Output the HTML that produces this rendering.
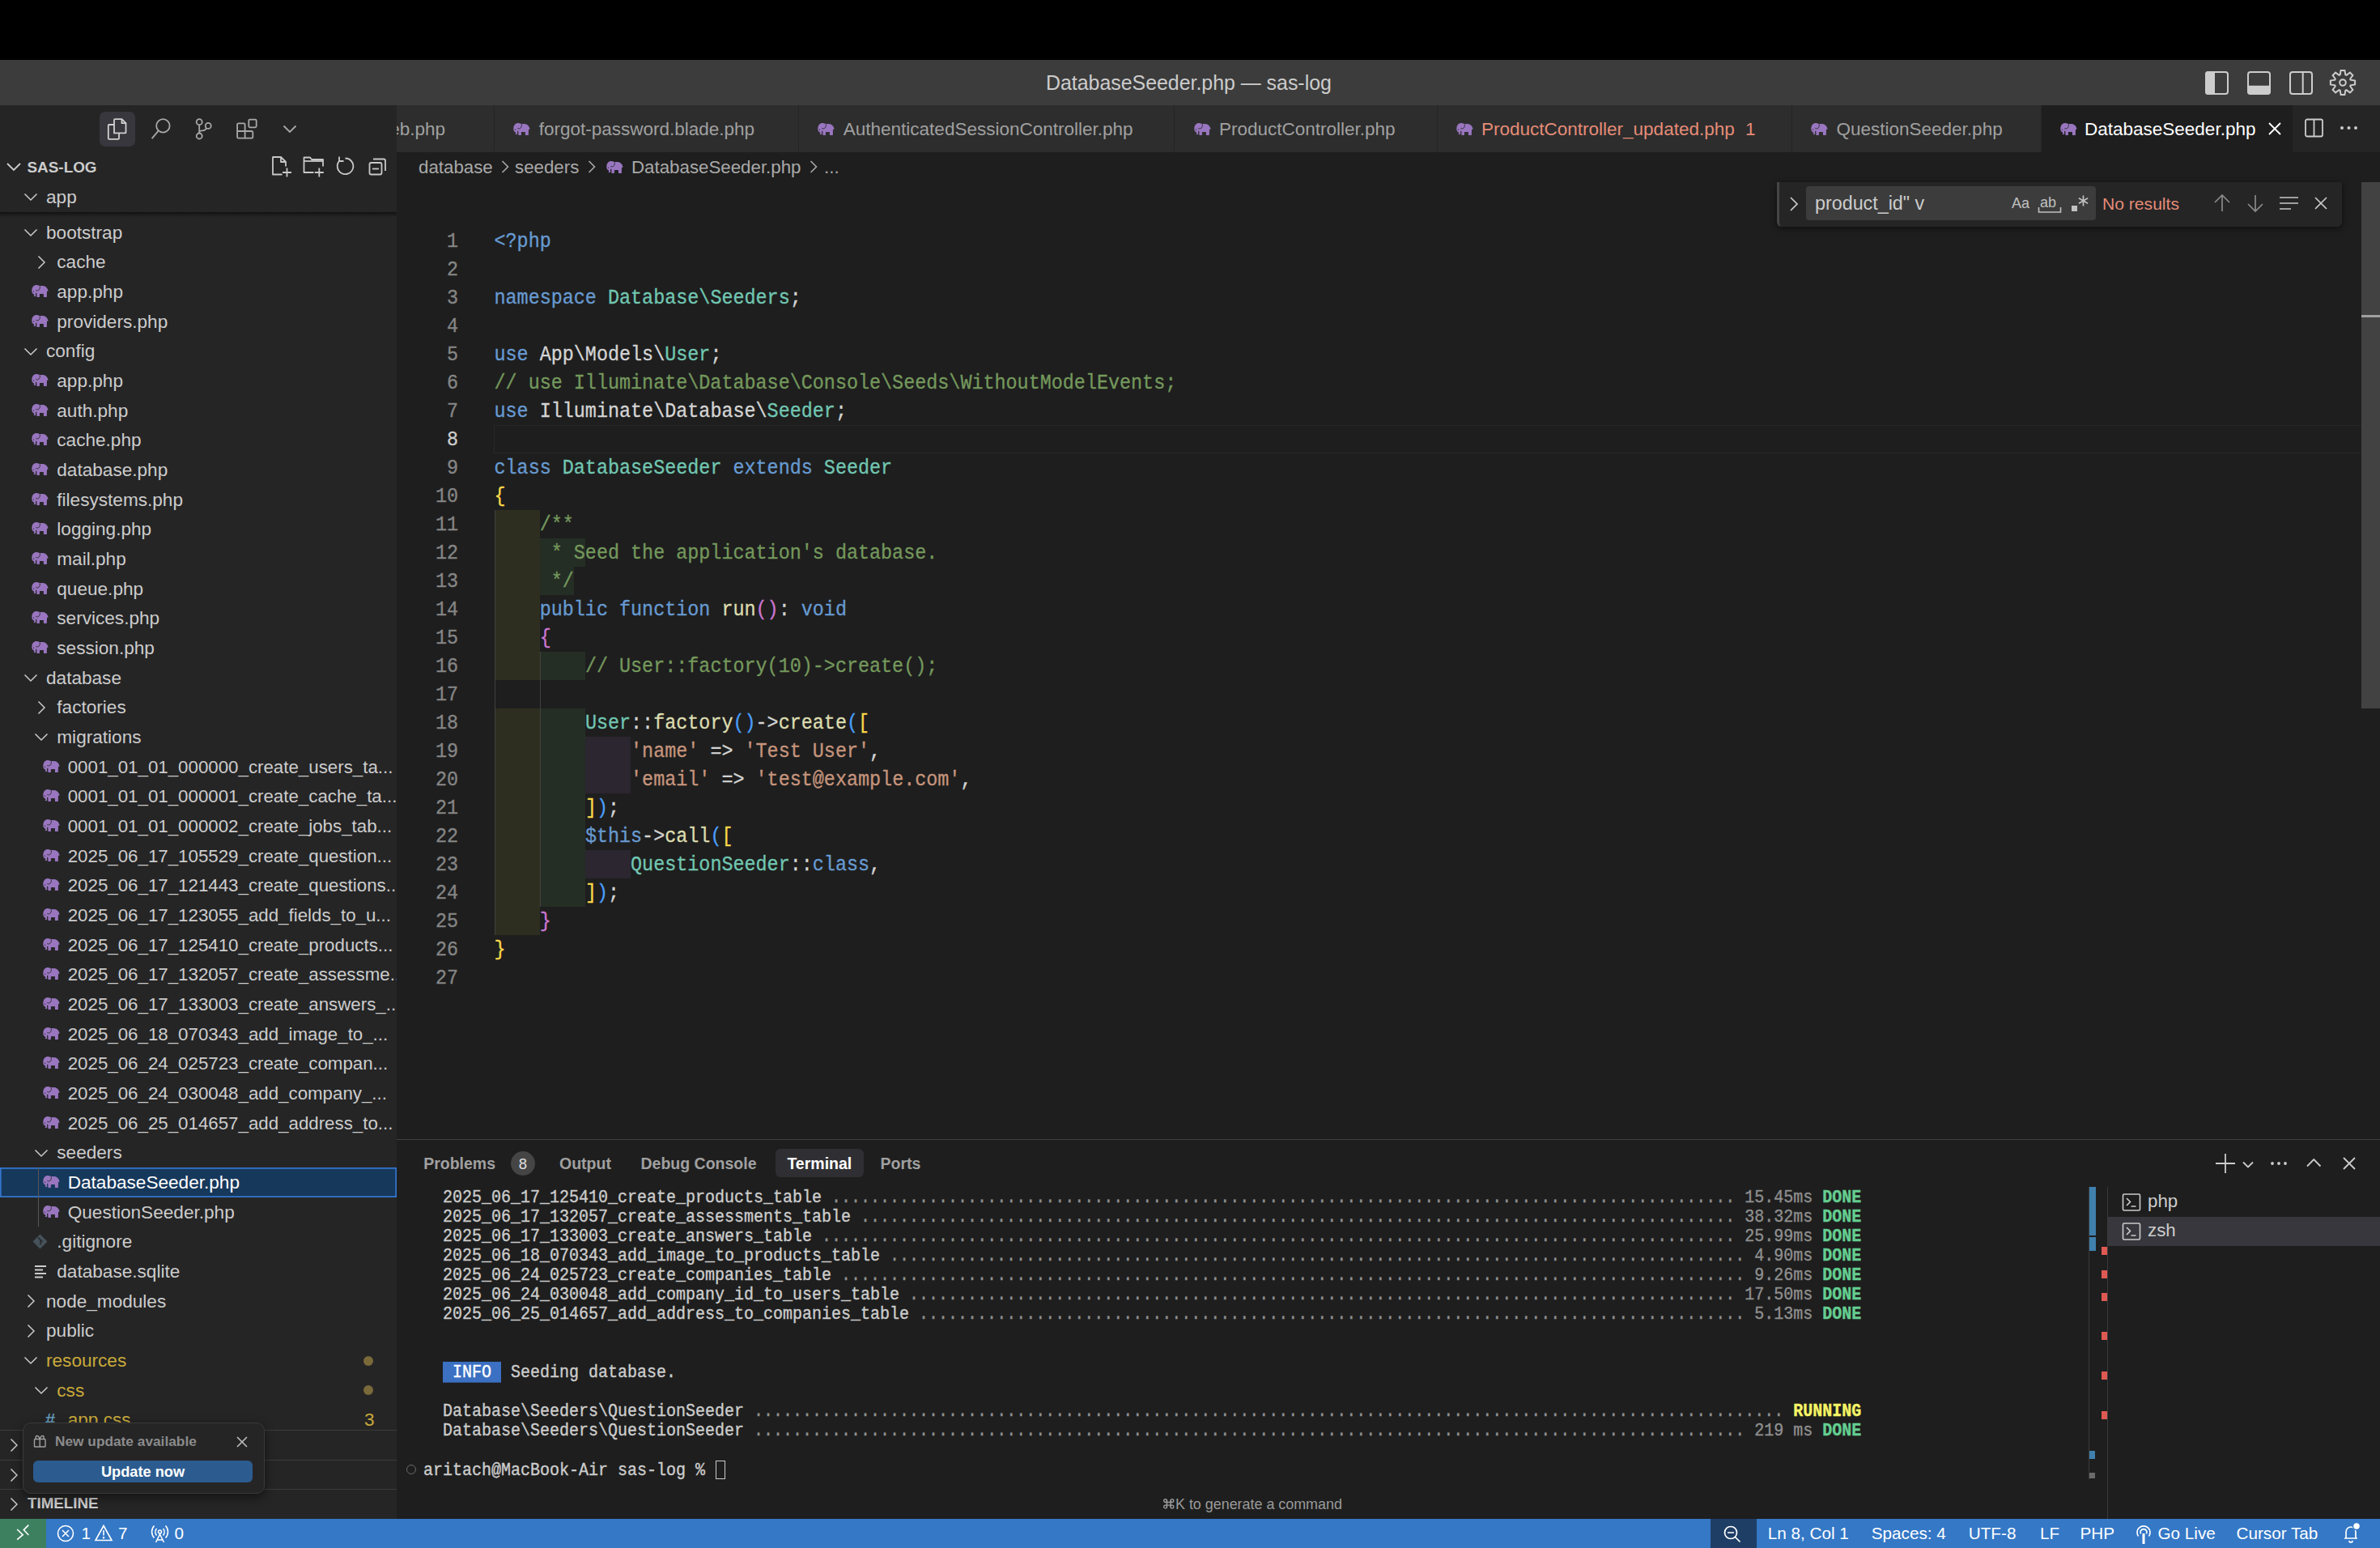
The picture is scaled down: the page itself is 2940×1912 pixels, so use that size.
<!DOCTYPE html><html><head><meta charset="utf-8"><style>
*{box-sizing:border-box}
body{margin:0;width:2940px;height:1912px;background:#000;position:relative;overflow:hidden;font-family:"Liberation Sans",sans-serif;color:#cccccc}
.abs{position:absolute}
.row{position:absolute;left:0;width:490px;height:36.667px;line-height:36.667px;font-size:22.3px;white-space:nowrap;color:#cccccc}
.row .t{position:absolute;top:1px;font-size:22.6px}
.row .t.tr{font-size:22.3px}
.chev{position:absolute;width:16px;height:16px}
.ele{position:absolute}
.code{position:absolute;left:610.5px;margin-top:2.5px;transform:scaleY(1.08);transform-origin:0 23.7px;-webkit-text-stroke:0.3px currentColor;font-family:"Liberation Mono",monospace;font-size:23.42px;white-space:pre;height:35px;line-height:35px;color:#d4d4d4}
.ln{position:absolute;left:491px;margin-top:2.5px;transform:scaleY(1.1);transform-origin:0 23.7px;-webkit-text-stroke:0.3px currentColor;width:75px;text-align:right;font-family:"Liberation Mono",monospace;font-size:23.42px;height:35px;line-height:35px;color:#6e7681}
.kw{color:#679ad1}.cl{color:#71c6b1}.cm{color:#74985c}.fn{color:#dcdcaf}.st{color:#c5947c}
.b1{color:#f9d849}.b2{color:#cc76d1}.b3{color:#4a9df8}
.term{position:absolute;left:523px;margin-top:1.5px;transform:scaleY(1.12);transform-origin:0 17.35px;-webkit-text-stroke:0.35px currentColor;font-family:"Liberation Mono",monospace;font-size:20px;white-space:pre;height:24.07px;line-height:24.07px;color:#cccccc}
.dim{color:#8f8f8f}.gr{color:#64ce91;font-weight:bold}.yl{color:#f5f566;font-weight:bold}
.tab{position:absolute;top:130px;height:58px;background:#2d2d2d;border-right:1.667px solid #252526;overflow:hidden}
.tab .tt{position:absolute;top:1px;line-height:58px;font-size:22.5px;white-space:nowrap;color:#a0a0a0}
.sb{position:absolute;top:1876px;height:36px;line-height:36px;font-size:20.7px;color:#ffffff;white-space:nowrap}
</style></head><body>
<div class="abs" style="top:74px;left:0;width:2940px;height:56px;background:#3c3c3c"></div>
<div class="abs" style="top:74px;left:1292px;height:56px;line-height:56px;font-size:24.9px;color:#cccccc;white-space:nowrap">DatabaseSeeder.php — sas-log</div>
<svg class="abs" style="left:2720px;top:84px" width="200" height="36" viewBox="0 0 200 36">
<g fill="none" stroke="#cccccc" stroke-width="2">
<rect x="5" y="5" width="27" height="27" rx="3"/>
<rect x="57" y="5" width="27" height="27" rx="3"/>
<rect x="109" y="5" width="27" height="27" rx="3"/><line x1="124.7" y1="5" x2="124.7" y2="32"/>
</g>
<path fill="#cccccc" d="M8 4h8v29h-8a4 4 0 0 1-4-4v-21a4 4 0 0 1 4-4z"/>
<path fill="#cccccc" d="M56 21.8h29v7a4 4 0 0 1-4 4h-21a4 4 0 0 1-4-4z"/>
</svg>
<svg class="abs" style="left:2876px;top:84px" width="36" height="36" viewBox="0 0 36 36"><g transform="translate(18,18)" fill="none" stroke="#cccccc" stroke-width="2">
<path d="M-3.32,-9.64 L-2.39,-15.11 L2.39,-15.11 L3.32,-9.64 L4.47,-9.17 L8.99,-12.38 L12.38,-8.99 L9.17,-4.47 L9.64,-3.32 L15.11,-2.39 L15.11,2.39 L9.64,3.32 L9.17,4.47 L12.38,8.99 L8.99,12.38 L4.47,9.17 L3.32,9.64 L2.39,15.11 L-2.39,15.11 L-3.32,9.64 L-4.47,9.17 L-8.99,12.38 L-12.38,8.99 L-9.17,4.47 L-9.64,3.32 L-15.11,2.39 L-15.11,-2.39 L-9.64,-3.32 L-9.17,-4.47 L-12.38,-8.99 L-8.99,-12.38 L-4.47,-9.17 Z"/>
<circle r="3.8"/></g></svg>
<div class="abs" style="top:130px;left:0;width:490px;height:1746px;background:#252526"></div>
<div class="abs" style="left:123px;top:138px;width:44px;height:43px;border-radius:7px;background:#37373d"></div>
<svg class="abs" style="left:120px;top:138px" width="260" height="44" viewBox="0 0 260 44">
<g fill="none" stroke="#d0d0d0" stroke-width="1.8" stroke-linejoin="round">
<path d="M21 26.4V10.2a1 1 0 0 1 1-1h8.5l5 5v11.2a1 1 0 0 1-1 1z"/><path d="M30.5 9.2v5h5"/>
<path d="M21 16h-6.2a1 1 0 0 0-1 1v15.8a1 1 0 0 0 1 1h11.2a1 1 0 0 0 1-1v-6.4"/>
</g>
<g fill="none" stroke="#a8a8a8" stroke-width="1.8">
<circle cx="81.4" cy="17.4" r="8.2"/><line x1="75.6" y1="23.6" x2="67.6" y2="33.2"/>
<circle cx="126.2" cy="12.7" r="3.5"/><circle cx="126.2" cy="30" r="3.5"/><circle cx="137.2" cy="17.4" r="3.5"/>
<path d="M126.2 16.2v10.3"/><path d="M135.2 20.3c-1.2 2-2.5 3-5 3h-1c-1.5 0-2.5 0.7-3 1.5"/>
<path d="M174.6 14.3h6.5a1.5 1.5 0 0 1 1.5 1.5v8.2h8.2a1.5 1.5 0 0 1 1.5 1.5v5.7a1.5 1.5 0 0 1-1.5 1.5h-16.2a1.5 1.5 0 0 1-1.5-1.5v-15.4a1.5 1.5 0 0 1 1.5-1.5z"/>
<path d="M173.1 24h9.5v9.2"/>
<rect x="187.3" y="9.6" width="9.4" height="9.7" rx="1.5"/>
<path d="M230.5 17.5l7.5 7.5l7.5-7.5"/>
</g></svg>
<svg class="abs" style="left:8px;top:197px" width="18" height="18" viewBox="0 0 18 18"><path d="M1 5l8 8l8-8" fill="none" stroke="#cccccc" stroke-width="1.8"/></svg>
<div class="abs" style="left:33.5px;top:188px;height:37px;line-height:37px;font-size:18.9px;font-weight:bold;color:#cccccc">SAS-LOG</div>
<svg class="abs" style="left:330px;top:190px" width="155" height="34" viewBox="0 0 155 34">
<g fill="none" stroke="#c8c8c8" stroke-width="1.8" stroke-linejoin="round">
<path d="M18.5 25.5H7V4h10l6 6v5.5"/><path d="M17 4v6h6"/><path d="M24.5 17.5v11M19 23h11"/>
<path d="M57.5 23H45.5V4.5h7.5l2 2.5H69v8.5"/><path d="M45.5 9H69"/><path d="M64.3 17.5v11M58.8 23h11"/>
<path d="M89.8 8.2A9.8 9.8 0 1 0 96.5 5.5"/><path d="M89 3.5v5.5h5.5"/>
<rect x="126.5" y="11" width="15" height="14.5" rx="2"/><path d="M131 6.5h13a2 2 0 0 1 2 2v12.5"/><path d="M130 18.5h8"/>
</g></svg>
<div class="abs" style="left:0;top:225px;width:490px;height:1541px;overflow:hidden">
<div class="row" style="top:43.70px;">
<svg class="abs" style="left:29.0px;top:9.3px" width="18" height="18" viewBox="0 0 18 18"><path d="M1.5 5.5l7.5 7.5l7.5-7.5" fill="none" stroke="#cccccc" stroke-width="1.45"/></svg>
<span class="t" style="left:57.0px;color:#cccccc">bootstrap</span>
</div>
<div class="row" style="top:80.37px;">
<svg class="abs" style="left:42.3px;top:9.3px" width="18" height="18" viewBox="0 0 18 18"><path d="M5.5 1.5l7.5 7.5l-7.5 7.5" fill="none" stroke="#cccccc" stroke-width="1.45"/></svg>
<span class="t" style="left:70.3px;color:#cccccc">cache</span>
</div>
<div class="row" style="top:117.03px;">
<svg class="ele" style="left:39.3px;top:10px" viewBox="0 0 21 15" width="21" height="15"><path fill="#9976bf" d="M0.3 7C0.3 2.5 3 0 6 0C8 0 9.5 0.8 10 1.2C11 1 12 1 13 1C17 1 19.5 3 20.3 6.5L21 7.4L20 7.2L19 8.2L18.8 15L15 15L14.8 11L10 11L9.8 15L6.5 15L6.3 10C5.5 9.6 5 10.2 5 11C5 12 6 13.6 4 14.2L2.4 13.6C3.8 13 3.6 12 2.8 11.5C1 10.5 0.3 9 0.3 7Z"/><path d="M10.2 1.4C10.8 3.5 10 6.6 7.2 7C6.2 7.1 5.4 6.6 5.2 6.2" fill="none" stroke="#252526" stroke-width="0.8"/><circle cx="2.6" cy="8.2" r="0.6" fill="#252526"/></svg>
<span class="t" style="left:70.3px;color:#cccccc">app.php</span>
</div>
<div class="row" style="top:153.70px;">
<svg class="ele" style="left:39.3px;top:10px" viewBox="0 0 21 15" width="21" height="15"><path fill="#9976bf" d="M0.3 7C0.3 2.5 3 0 6 0C8 0 9.5 0.8 10 1.2C11 1 12 1 13 1C17 1 19.5 3 20.3 6.5L21 7.4L20 7.2L19 8.2L18.8 15L15 15L14.8 11L10 11L9.8 15L6.5 15L6.3 10C5.5 9.6 5 10.2 5 11C5 12 6 13.6 4 14.2L2.4 13.6C3.8 13 3.6 12 2.8 11.5C1 10.5 0.3 9 0.3 7Z"/><path d="M10.2 1.4C10.8 3.5 10 6.6 7.2 7C6.2 7.1 5.4 6.6 5.2 6.2" fill="none" stroke="#252526" stroke-width="0.8"/><circle cx="2.6" cy="8.2" r="0.6" fill="#252526"/></svg>
<span class="t" style="left:70.3px;color:#cccccc">providers.php</span>
</div>
<div class="row" style="top:190.37px;">
<svg class="abs" style="left:29.0px;top:9.3px" width="18" height="18" viewBox="0 0 18 18"><path d="M1.5 5.5l7.5 7.5l7.5-7.5" fill="none" stroke="#cccccc" stroke-width="1.45"/></svg>
<span class="t" style="left:57.0px;color:#cccccc">config</span>
</div>
<div class="row" style="top:227.03px;">
<svg class="ele" style="left:39.3px;top:10px" viewBox="0 0 21 15" width="21" height="15"><path fill="#9976bf" d="M0.3 7C0.3 2.5 3 0 6 0C8 0 9.5 0.8 10 1.2C11 1 12 1 13 1C17 1 19.5 3 20.3 6.5L21 7.4L20 7.2L19 8.2L18.8 15L15 15L14.8 11L10 11L9.8 15L6.5 15L6.3 10C5.5 9.6 5 10.2 5 11C5 12 6 13.6 4 14.2L2.4 13.6C3.8 13 3.6 12 2.8 11.5C1 10.5 0.3 9 0.3 7Z"/><path d="M10.2 1.4C10.8 3.5 10 6.6 7.2 7C6.2 7.1 5.4 6.6 5.2 6.2" fill="none" stroke="#252526" stroke-width="0.8"/><circle cx="2.6" cy="8.2" r="0.6" fill="#252526"/></svg>
<span class="t" style="left:70.3px;color:#cccccc">app.php</span>
</div>
<div class="row" style="top:263.70px;">
<svg class="ele" style="left:39.3px;top:10px" viewBox="0 0 21 15" width="21" height="15"><path fill="#9976bf" d="M0.3 7C0.3 2.5 3 0 6 0C8 0 9.5 0.8 10 1.2C11 1 12 1 13 1C17 1 19.5 3 20.3 6.5L21 7.4L20 7.2L19 8.2L18.8 15L15 15L14.8 11L10 11L9.8 15L6.5 15L6.3 10C5.5 9.6 5 10.2 5 11C5 12 6 13.6 4 14.2L2.4 13.6C3.8 13 3.6 12 2.8 11.5C1 10.5 0.3 9 0.3 7Z"/><path d="M10.2 1.4C10.8 3.5 10 6.6 7.2 7C6.2 7.1 5.4 6.6 5.2 6.2" fill="none" stroke="#252526" stroke-width="0.8"/><circle cx="2.6" cy="8.2" r="0.6" fill="#252526"/></svg>
<span class="t" style="left:70.3px;color:#cccccc">auth.php</span>
</div>
<div class="row" style="top:300.37px;">
<svg class="ele" style="left:39.3px;top:10px" viewBox="0 0 21 15" width="21" height="15"><path fill="#9976bf" d="M0.3 7C0.3 2.5 3 0 6 0C8 0 9.5 0.8 10 1.2C11 1 12 1 13 1C17 1 19.5 3 20.3 6.5L21 7.4L20 7.2L19 8.2L18.8 15L15 15L14.8 11L10 11L9.8 15L6.5 15L6.3 10C5.5 9.6 5 10.2 5 11C5 12 6 13.6 4 14.2L2.4 13.6C3.8 13 3.6 12 2.8 11.5C1 10.5 0.3 9 0.3 7Z"/><path d="M10.2 1.4C10.8 3.5 10 6.6 7.2 7C6.2 7.1 5.4 6.6 5.2 6.2" fill="none" stroke="#252526" stroke-width="0.8"/><circle cx="2.6" cy="8.2" r="0.6" fill="#252526"/></svg>
<span class="t" style="left:70.3px;color:#cccccc">cache.php</span>
</div>
<div class="row" style="top:337.03px;">
<svg class="ele" style="left:39.3px;top:10px" viewBox="0 0 21 15" width="21" height="15"><path fill="#9976bf" d="M0.3 7C0.3 2.5 3 0 6 0C8 0 9.5 0.8 10 1.2C11 1 12 1 13 1C17 1 19.5 3 20.3 6.5L21 7.4L20 7.2L19 8.2L18.8 15L15 15L14.8 11L10 11L9.8 15L6.5 15L6.3 10C5.5 9.6 5 10.2 5 11C5 12 6 13.6 4 14.2L2.4 13.6C3.8 13 3.6 12 2.8 11.5C1 10.5 0.3 9 0.3 7Z"/><path d="M10.2 1.4C10.8 3.5 10 6.6 7.2 7C6.2 7.1 5.4 6.6 5.2 6.2" fill="none" stroke="#252526" stroke-width="0.8"/><circle cx="2.6" cy="8.2" r="0.6" fill="#252526"/></svg>
<span class="t" style="left:70.3px;color:#cccccc">database.php</span>
</div>
<div class="row" style="top:373.70px;">
<svg class="ele" style="left:39.3px;top:10px" viewBox="0 0 21 15" width="21" height="15"><path fill="#9976bf" d="M0.3 7C0.3 2.5 3 0 6 0C8 0 9.5 0.8 10 1.2C11 1 12 1 13 1C17 1 19.5 3 20.3 6.5L21 7.4L20 7.2L19 8.2L18.8 15L15 15L14.8 11L10 11L9.8 15L6.5 15L6.3 10C5.5 9.6 5 10.2 5 11C5 12 6 13.6 4 14.2L2.4 13.6C3.8 13 3.6 12 2.8 11.5C1 10.5 0.3 9 0.3 7Z"/><path d="M10.2 1.4C10.8 3.5 10 6.6 7.2 7C6.2 7.1 5.4 6.6 5.2 6.2" fill="none" stroke="#252526" stroke-width="0.8"/><circle cx="2.6" cy="8.2" r="0.6" fill="#252526"/></svg>
<span class="t" style="left:70.3px;color:#cccccc">filesystems.php</span>
</div>
<div class="row" style="top:410.37px;">
<svg class="ele" style="left:39.3px;top:10px" viewBox="0 0 21 15" width="21" height="15"><path fill="#9976bf" d="M0.3 7C0.3 2.5 3 0 6 0C8 0 9.5 0.8 10 1.2C11 1 12 1 13 1C17 1 19.5 3 20.3 6.5L21 7.4L20 7.2L19 8.2L18.8 15L15 15L14.8 11L10 11L9.8 15L6.5 15L6.3 10C5.5 9.6 5 10.2 5 11C5 12 6 13.6 4 14.2L2.4 13.6C3.8 13 3.6 12 2.8 11.5C1 10.5 0.3 9 0.3 7Z"/><path d="M10.2 1.4C10.8 3.5 10 6.6 7.2 7C6.2 7.1 5.4 6.6 5.2 6.2" fill="none" stroke="#252526" stroke-width="0.8"/><circle cx="2.6" cy="8.2" r="0.6" fill="#252526"/></svg>
<span class="t" style="left:70.3px;color:#cccccc">logging.php</span>
</div>
<div class="row" style="top:447.03px;">
<svg class="ele" style="left:39.3px;top:10px" viewBox="0 0 21 15" width="21" height="15"><path fill="#9976bf" d="M0.3 7C0.3 2.5 3 0 6 0C8 0 9.5 0.8 10 1.2C11 1 12 1 13 1C17 1 19.5 3 20.3 6.5L21 7.4L20 7.2L19 8.2L18.8 15L15 15L14.8 11L10 11L9.8 15L6.5 15L6.3 10C5.5 9.6 5 10.2 5 11C5 12 6 13.6 4 14.2L2.4 13.6C3.8 13 3.6 12 2.8 11.5C1 10.5 0.3 9 0.3 7Z"/><path d="M10.2 1.4C10.8 3.5 10 6.6 7.2 7C6.2 7.1 5.4 6.6 5.2 6.2" fill="none" stroke="#252526" stroke-width="0.8"/><circle cx="2.6" cy="8.2" r="0.6" fill="#252526"/></svg>
<span class="t" style="left:70.3px;color:#cccccc">mail.php</span>
</div>
<div class="row" style="top:483.70px;">
<svg class="ele" style="left:39.3px;top:10px" viewBox="0 0 21 15" width="21" height="15"><path fill="#9976bf" d="M0.3 7C0.3 2.5 3 0 6 0C8 0 9.5 0.8 10 1.2C11 1 12 1 13 1C17 1 19.5 3 20.3 6.5L21 7.4L20 7.2L19 8.2L18.8 15L15 15L14.8 11L10 11L9.8 15L6.5 15L6.3 10C5.5 9.6 5 10.2 5 11C5 12 6 13.6 4 14.2L2.4 13.6C3.8 13 3.6 12 2.8 11.5C1 10.5 0.3 9 0.3 7Z"/><path d="M10.2 1.4C10.8 3.5 10 6.6 7.2 7C6.2 7.1 5.4 6.6 5.2 6.2" fill="none" stroke="#252526" stroke-width="0.8"/><circle cx="2.6" cy="8.2" r="0.6" fill="#252526"/></svg>
<span class="t" style="left:70.3px;color:#cccccc">queue.php</span>
</div>
<div class="row" style="top:520.37px;">
<svg class="ele" style="left:39.3px;top:10px" viewBox="0 0 21 15" width="21" height="15"><path fill="#9976bf" d="M0.3 7C0.3 2.5 3 0 6 0C8 0 9.5 0.8 10 1.2C11 1 12 1 13 1C17 1 19.5 3 20.3 6.5L21 7.4L20 7.2L19 8.2L18.8 15L15 15L14.8 11L10 11L9.8 15L6.5 15L6.3 10C5.5 9.6 5 10.2 5 11C5 12 6 13.6 4 14.2L2.4 13.6C3.8 13 3.6 12 2.8 11.5C1 10.5 0.3 9 0.3 7Z"/><path d="M10.2 1.4C10.8 3.5 10 6.6 7.2 7C6.2 7.1 5.4 6.6 5.2 6.2" fill="none" stroke="#252526" stroke-width="0.8"/><circle cx="2.6" cy="8.2" r="0.6" fill="#252526"/></svg>
<span class="t" style="left:70.3px;color:#cccccc">services.php</span>
</div>
<div class="row" style="top:557.03px;">
<svg class="ele" style="left:39.3px;top:10px" viewBox="0 0 21 15" width="21" height="15"><path fill="#9976bf" d="M0.3 7C0.3 2.5 3 0 6 0C8 0 9.5 0.8 10 1.2C11 1 12 1 13 1C17 1 19.5 3 20.3 6.5L21 7.4L20 7.2L19 8.2L18.8 15L15 15L14.8 11L10 11L9.8 15L6.5 15L6.3 10C5.5 9.6 5 10.2 5 11C5 12 6 13.6 4 14.2L2.4 13.6C3.8 13 3.6 12 2.8 11.5C1 10.5 0.3 9 0.3 7Z"/><path d="M10.2 1.4C10.8 3.5 10 6.6 7.2 7C6.2 7.1 5.4 6.6 5.2 6.2" fill="none" stroke="#252526" stroke-width="0.8"/><circle cx="2.6" cy="8.2" r="0.6" fill="#252526"/></svg>
<span class="t" style="left:70.3px;color:#cccccc">session.php</span>
</div>
<div class="row" style="top:593.70px;">
<svg class="abs" style="left:29.0px;top:9.3px" width="18" height="18" viewBox="0 0 18 18"><path d="M1.5 5.5l7.5 7.5l7.5-7.5" fill="none" stroke="#cccccc" stroke-width="1.45"/></svg>
<span class="t" style="left:57.0px;color:#cccccc">database</span>
</div>
<div class="row" style="top:630.37px;">
<svg class="abs" style="left:42.3px;top:9.3px" width="18" height="18" viewBox="0 0 18 18"><path d="M5.5 1.5l7.5 7.5l-7.5 7.5" fill="none" stroke="#cccccc" stroke-width="1.45"/></svg>
<span class="t" style="left:70.3px;color:#cccccc">factories</span>
</div>
<div class="row" style="top:667.03px;">
<svg class="abs" style="left:42.3px;top:9.3px" width="18" height="18" viewBox="0 0 18 18"><path d="M1.5 5.5l7.5 7.5l7.5-7.5" fill="none" stroke="#cccccc" stroke-width="1.45"/></svg>
<span class="t" style="left:70.3px;color:#cccccc">migrations</span>
</div>
<div class="row" style="top:703.70px;">
<svg class="ele" style="left:52.7px;top:10px" viewBox="0 0 21 15" width="21" height="15"><path fill="#9976bf" d="M0.3 7C0.3 2.5 3 0 6 0C8 0 9.5 0.8 10 1.2C11 1 12 1 13 1C17 1 19.5 3 20.3 6.5L21 7.4L20 7.2L19 8.2L18.8 15L15 15L14.8 11L10 11L9.8 15L6.5 15L6.3 10C5.5 9.6 5 10.2 5 11C5 12 6 13.6 4 14.2L2.4 13.6C3.8 13 3.6 12 2.8 11.5C1 10.5 0.3 9 0.3 7Z"/><path d="M10.2 1.4C10.8 3.5 10 6.6 7.2 7C6.2 7.1 5.4 6.6 5.2 6.2" fill="none" stroke="#252526" stroke-width="0.8"/><circle cx="2.6" cy="8.2" r="0.6" fill="#252526"/></svg>
<span class="t tr" style="left:83.7px;color:#cccccc">0001_01_01_000000_create_users_ta...</span>
</div>
<div class="row" style="top:740.37px;">
<svg class="ele" style="left:52.7px;top:10px" viewBox="0 0 21 15" width="21" height="15"><path fill="#9976bf" d="M0.3 7C0.3 2.5 3 0 6 0C8 0 9.5 0.8 10 1.2C11 1 12 1 13 1C17 1 19.5 3 20.3 6.5L21 7.4L20 7.2L19 8.2L18.8 15L15 15L14.8 11L10 11L9.8 15L6.5 15L6.3 10C5.5 9.6 5 10.2 5 11C5 12 6 13.6 4 14.2L2.4 13.6C3.8 13 3.6 12 2.8 11.5C1 10.5 0.3 9 0.3 7Z"/><path d="M10.2 1.4C10.8 3.5 10 6.6 7.2 7C6.2 7.1 5.4 6.6 5.2 6.2" fill="none" stroke="#252526" stroke-width="0.8"/><circle cx="2.6" cy="8.2" r="0.6" fill="#252526"/></svg>
<span class="t tr" style="left:83.7px;color:#cccccc">0001_01_01_000001_create_cache_ta...</span>
</div>
<div class="row" style="top:777.03px;">
<svg class="ele" style="left:52.7px;top:10px" viewBox="0 0 21 15" width="21" height="15"><path fill="#9976bf" d="M0.3 7C0.3 2.5 3 0 6 0C8 0 9.5 0.8 10 1.2C11 1 12 1 13 1C17 1 19.5 3 20.3 6.5L21 7.4L20 7.2L19 8.2L18.8 15L15 15L14.8 11L10 11L9.8 15L6.5 15L6.3 10C5.5 9.6 5 10.2 5 11C5 12 6 13.6 4 14.2L2.4 13.6C3.8 13 3.6 12 2.8 11.5C1 10.5 0.3 9 0.3 7Z"/><path d="M10.2 1.4C10.8 3.5 10 6.6 7.2 7C6.2 7.1 5.4 6.6 5.2 6.2" fill="none" stroke="#252526" stroke-width="0.8"/><circle cx="2.6" cy="8.2" r="0.6" fill="#252526"/></svg>
<span class="t tr" style="left:83.7px;color:#cccccc">0001_01_01_000002_create_jobs_tab...</span>
</div>
<div class="row" style="top:813.70px;">
<svg class="ele" style="left:52.7px;top:10px" viewBox="0 0 21 15" width="21" height="15"><path fill="#9976bf" d="M0.3 7C0.3 2.5 3 0 6 0C8 0 9.5 0.8 10 1.2C11 1 12 1 13 1C17 1 19.5 3 20.3 6.5L21 7.4L20 7.2L19 8.2L18.8 15L15 15L14.8 11L10 11L9.8 15L6.5 15L6.3 10C5.5 9.6 5 10.2 5 11C5 12 6 13.6 4 14.2L2.4 13.6C3.8 13 3.6 12 2.8 11.5C1 10.5 0.3 9 0.3 7Z"/><path d="M10.2 1.4C10.8 3.5 10 6.6 7.2 7C6.2 7.1 5.4 6.6 5.2 6.2" fill="none" stroke="#252526" stroke-width="0.8"/><circle cx="2.6" cy="8.2" r="0.6" fill="#252526"/></svg>
<span class="t tr" style="left:83.7px;color:#cccccc">2025_06_17_105529_create_question...</span>
</div>
<div class="row" style="top:850.37px;">
<svg class="ele" style="left:52.7px;top:10px" viewBox="0 0 21 15" width="21" height="15"><path fill="#9976bf" d="M0.3 7C0.3 2.5 3 0 6 0C8 0 9.5 0.8 10 1.2C11 1 12 1 13 1C17 1 19.5 3 20.3 6.5L21 7.4L20 7.2L19 8.2L18.8 15L15 15L14.8 11L10 11L9.8 15L6.5 15L6.3 10C5.5 9.6 5 10.2 5 11C5 12 6 13.6 4 14.2L2.4 13.6C3.8 13 3.6 12 2.8 11.5C1 10.5 0.3 9 0.3 7Z"/><path d="M10.2 1.4C10.8 3.5 10 6.6 7.2 7C6.2 7.1 5.4 6.6 5.2 6.2" fill="none" stroke="#252526" stroke-width="0.8"/><circle cx="2.6" cy="8.2" r="0.6" fill="#252526"/></svg>
<span class="t tr" style="left:83.7px;color:#cccccc">2025_06_17_121443_create_questions...</span>
</div>
<div class="row" style="top:887.03px;">
<svg class="ele" style="left:52.7px;top:10px" viewBox="0 0 21 15" width="21" height="15"><path fill="#9976bf" d="M0.3 7C0.3 2.5 3 0 6 0C8 0 9.5 0.8 10 1.2C11 1 12 1 13 1C17 1 19.5 3 20.3 6.5L21 7.4L20 7.2L19 8.2L18.8 15L15 15L14.8 11L10 11L9.8 15L6.5 15L6.3 10C5.5 9.6 5 10.2 5 11C5 12 6 13.6 4 14.2L2.4 13.6C3.8 13 3.6 12 2.8 11.5C1 10.5 0.3 9 0.3 7Z"/><path d="M10.2 1.4C10.8 3.5 10 6.6 7.2 7C6.2 7.1 5.4 6.6 5.2 6.2" fill="none" stroke="#252526" stroke-width="0.8"/><circle cx="2.6" cy="8.2" r="0.6" fill="#252526"/></svg>
<span class="t tr" style="left:83.7px;color:#cccccc">2025_06_17_123055_add_fields_to_u...</span>
</div>
<div class="row" style="top:923.70px;">
<svg class="ele" style="left:52.7px;top:10px" viewBox="0 0 21 15" width="21" height="15"><path fill="#9976bf" d="M0.3 7C0.3 2.5 3 0 6 0C8 0 9.5 0.8 10 1.2C11 1 12 1 13 1C17 1 19.5 3 20.3 6.5L21 7.4L20 7.2L19 8.2L18.8 15L15 15L14.8 11L10 11L9.8 15L6.5 15L6.3 10C5.5 9.6 5 10.2 5 11C5 12 6 13.6 4 14.2L2.4 13.6C3.8 13 3.6 12 2.8 11.5C1 10.5 0.3 9 0.3 7Z"/><path d="M10.2 1.4C10.8 3.5 10 6.6 7.2 7C6.2 7.1 5.4 6.6 5.2 6.2" fill="none" stroke="#252526" stroke-width="0.8"/><circle cx="2.6" cy="8.2" r="0.6" fill="#252526"/></svg>
<span class="t tr" style="left:83.7px;color:#cccccc">2025_06_17_125410_create_products...</span>
</div>
<div class="row" style="top:960.37px;">
<svg class="ele" style="left:52.7px;top:10px" viewBox="0 0 21 15" width="21" height="15"><path fill="#9976bf" d="M0.3 7C0.3 2.5 3 0 6 0C8 0 9.5 0.8 10 1.2C11 1 12 1 13 1C17 1 19.5 3 20.3 6.5L21 7.4L20 7.2L19 8.2L18.8 15L15 15L14.8 11L10 11L9.8 15L6.5 15L6.3 10C5.5 9.6 5 10.2 5 11C5 12 6 13.6 4 14.2L2.4 13.6C3.8 13 3.6 12 2.8 11.5C1 10.5 0.3 9 0.3 7Z"/><path d="M10.2 1.4C10.8 3.5 10 6.6 7.2 7C6.2 7.1 5.4 6.6 5.2 6.2" fill="none" stroke="#252526" stroke-width="0.8"/><circle cx="2.6" cy="8.2" r="0.6" fill="#252526"/></svg>
<span class="t tr" style="left:83.7px;color:#cccccc">2025_06_17_132057_create_assessme...</span>
</div>
<div class="row" style="top:997.03px;">
<svg class="ele" style="left:52.7px;top:10px" viewBox="0 0 21 15" width="21" height="15"><path fill="#9976bf" d="M0.3 7C0.3 2.5 3 0 6 0C8 0 9.5 0.8 10 1.2C11 1 12 1 13 1C17 1 19.5 3 20.3 6.5L21 7.4L20 7.2L19 8.2L18.8 15L15 15L14.8 11L10 11L9.8 15L6.5 15L6.3 10C5.5 9.6 5 10.2 5 11C5 12 6 13.6 4 14.2L2.4 13.6C3.8 13 3.6 12 2.8 11.5C1 10.5 0.3 9 0.3 7Z"/><path d="M10.2 1.4C10.8 3.5 10 6.6 7.2 7C6.2 7.1 5.4 6.6 5.2 6.2" fill="none" stroke="#252526" stroke-width="0.8"/><circle cx="2.6" cy="8.2" r="0.6" fill="#252526"/></svg>
<span class="t tr" style="left:83.7px;color:#cccccc">2025_06_17_133003_create_answers_...</span>
</div>
<div class="row" style="top:1033.70px;">
<svg class="ele" style="left:52.7px;top:10px" viewBox="0 0 21 15" width="21" height="15"><path fill="#9976bf" d="M0.3 7C0.3 2.5 3 0 6 0C8 0 9.5 0.8 10 1.2C11 1 12 1 13 1C17 1 19.5 3 20.3 6.5L21 7.4L20 7.2L19 8.2L18.8 15L15 15L14.8 11L10 11L9.8 15L6.5 15L6.3 10C5.5 9.6 5 10.2 5 11C5 12 6 13.6 4 14.2L2.4 13.6C3.8 13 3.6 12 2.8 11.5C1 10.5 0.3 9 0.3 7Z"/><path d="M10.2 1.4C10.8 3.5 10 6.6 7.2 7C6.2 7.1 5.4 6.6 5.2 6.2" fill="none" stroke="#252526" stroke-width="0.8"/><circle cx="2.6" cy="8.2" r="0.6" fill="#252526"/></svg>
<span class="t tr" style="left:83.7px;color:#cccccc">2025_06_18_070343_add_image_to_...</span>
</div>
<div class="row" style="top:1070.37px;">
<svg class="ele" style="left:52.7px;top:10px" viewBox="0 0 21 15" width="21" height="15"><path fill="#9976bf" d="M0.3 7C0.3 2.5 3 0 6 0C8 0 9.5 0.8 10 1.2C11 1 12 1 13 1C17 1 19.5 3 20.3 6.5L21 7.4L20 7.2L19 8.2L18.8 15L15 15L14.8 11L10 11L9.8 15L6.5 15L6.3 10C5.5 9.6 5 10.2 5 11C5 12 6 13.6 4 14.2L2.4 13.6C3.8 13 3.6 12 2.8 11.5C1 10.5 0.3 9 0.3 7Z"/><path d="M10.2 1.4C10.8 3.5 10 6.6 7.2 7C6.2 7.1 5.4 6.6 5.2 6.2" fill="none" stroke="#252526" stroke-width="0.8"/><circle cx="2.6" cy="8.2" r="0.6" fill="#252526"/></svg>
<span class="t tr" style="left:83.7px;color:#cccccc">2025_06_24_025723_create_compan...</span>
</div>
<div class="row" style="top:1107.03px;">
<svg class="ele" style="left:52.7px;top:10px" viewBox="0 0 21 15" width="21" height="15"><path fill="#9976bf" d="M0.3 7C0.3 2.5 3 0 6 0C8 0 9.5 0.8 10 1.2C11 1 12 1 13 1C17 1 19.5 3 20.3 6.5L21 7.4L20 7.2L19 8.2L18.8 15L15 15L14.8 11L10 11L9.8 15L6.5 15L6.3 10C5.5 9.6 5 10.2 5 11C5 12 6 13.6 4 14.2L2.4 13.6C3.8 13 3.6 12 2.8 11.5C1 10.5 0.3 9 0.3 7Z"/><path d="M10.2 1.4C10.8 3.5 10 6.6 7.2 7C6.2 7.1 5.4 6.6 5.2 6.2" fill="none" stroke="#252526" stroke-width="0.8"/><circle cx="2.6" cy="8.2" r="0.6" fill="#252526"/></svg>
<span class="t tr" style="left:83.7px;color:#cccccc">2025_06_24_030048_add_company_...</span>
</div>
<div class="row" style="top:1143.70px;">
<svg class="ele" style="left:52.7px;top:10px" viewBox="0 0 21 15" width="21" height="15"><path fill="#9976bf" d="M0.3 7C0.3 2.5 3 0 6 0C8 0 9.5 0.8 10 1.2C11 1 12 1 13 1C17 1 19.5 3 20.3 6.5L21 7.4L20 7.2L19 8.2L18.8 15L15 15L14.8 11L10 11L9.8 15L6.5 15L6.3 10C5.5 9.6 5 10.2 5 11C5 12 6 13.6 4 14.2L2.4 13.6C3.8 13 3.6 12 2.8 11.5C1 10.5 0.3 9 0.3 7Z"/><path d="M10.2 1.4C10.8 3.5 10 6.6 7.2 7C6.2 7.1 5.4 6.6 5.2 6.2" fill="none" stroke="#252526" stroke-width="0.8"/><circle cx="2.6" cy="8.2" r="0.6" fill="#252526"/></svg>
<span class="t tr" style="left:83.7px;color:#cccccc">2025_06_25_014657_add_address_to...</span>
</div>
<div class="row" style="top:1180.37px;">
<svg class="abs" style="left:42.3px;top:9.3px" width="18" height="18" viewBox="0 0 18 18"><path d="M1.5 5.5l7.5 7.5l7.5-7.5" fill="none" stroke="#cccccc" stroke-width="1.45"/></svg>
<span class="t" style="left:70.3px;color:#cccccc">seeders</span>
</div>
<div class="row" style="top:1217.03px;background:#16385b;box-shadow:inset 0 0 0 1.667px #3376cd;">
<svg class="ele" style="left:52.7px;top:10px" viewBox="0 0 21 15" width="21" height="15"><path fill="#9976bf" d="M0.3 7C0.3 2.5 3 0 6 0C8 0 9.5 0.8 10 1.2C11 1 12 1 13 1C17 1 19.5 3 20.3 6.5L21 7.4L20 7.2L19 8.2L18.8 15L15 15L14.8 11L10 11L9.8 15L6.5 15L6.3 10C5.5 9.6 5 10.2 5 11C5 12 6 13.6 4 14.2L2.4 13.6C3.8 13 3.6 12 2.8 11.5C1 10.5 0.3 9 0.3 7Z"/><path d="M10.2 1.4C10.8 3.5 10 6.6 7.2 7C6.2 7.1 5.4 6.6 5.2 6.2" fill="none" stroke="#252526" stroke-width="0.8"/><circle cx="2.6" cy="8.2" r="0.6" fill="#252526"/></svg>
<span class="t" style="left:83.7px;color:#ffffff">DatabaseSeeder.php</span>
</div>
<div class="row" style="top:1253.70px;">
<svg class="ele" style="left:52.7px;top:10px" viewBox="0 0 21 15" width="21" height="15"><path fill="#9976bf" d="M0.3 7C0.3 2.5 3 0 6 0C8 0 9.5 0.8 10 1.2C11 1 12 1 13 1C17 1 19.5 3 20.3 6.5L21 7.4L20 7.2L19 8.2L18.8 15L15 15L14.8 11L10 11L9.8 15L6.5 15L6.3 10C5.5 9.6 5 10.2 5 11C5 12 6 13.6 4 14.2L2.4 13.6C3.8 13 3.6 12 2.8 11.5C1 10.5 0.3 9 0.3 7Z"/><path d="M10.2 1.4C10.8 3.5 10 6.6 7.2 7C6.2 7.1 5.4 6.6 5.2 6.2" fill="none" stroke="#252526" stroke-width="0.8"/><circle cx="2.6" cy="8.2" r="0.6" fill="#252526"/></svg>
<span class="t" style="left:83.7px;color:#cccccc">QuestionSeeder.php</span>
</div>
<div class="row" style="top:1290.37px;">
<svg class="abs" style="left:40.3px;top:9px" width="19" height="19" viewBox="0 0 19 19"><path d="M9.5 0.5l9 9l-9 9l-9-9z" fill="#45525a"/><path d="M7 4.5l3 3v6M10 7.5l2.5 2.5" stroke="#252526" stroke-width="1.4" fill="none"/></svg>
<span class="t" style="left:70.3px;color:#cccccc">.gitignore</span>
</div>
<div class="row" style="top:1327.03px;">
<svg class="abs" style="left:42.3px;top:10px" width="18" height="17" viewBox="0 0 18 17"><g stroke="#cccccc" stroke-width="2"><path d="M1 2h14M1 6.5h10M1 11h14M1 15.5h10"/></g></svg>
<span class="t" style="left:70.3px;color:#cccccc">database.sqlite</span>
</div>
<div class="row" style="top:1363.70px;">
<svg class="abs" style="left:29.0px;top:9.3px" width="18" height="18" viewBox="0 0 18 18"><path d="M5.5 1.5l7.5 7.5l-7.5 7.5" fill="none" stroke="#cccccc" stroke-width="1.45"/></svg>
<span class="t" style="left:57.0px;color:#cccccc">node_modules</span>
</div>
<div class="row" style="top:1400.37px;">
<svg class="abs" style="left:29.0px;top:9.3px" width="18" height="18" viewBox="0 0 18 18"><path d="M5.5 1.5l7.5 7.5l-7.5 7.5" fill="none" stroke="#cccccc" stroke-width="1.45"/></svg>
<span class="t" style="left:57.0px;color:#cccccc">public</span>
</div>
<div class="row" style="top:1437.03px;">
<svg class="abs" style="left:29.0px;top:9.3px" width="18" height="18" viewBox="0 0 18 18"><path d="M1.5 5.5l7.5 7.5l7.5-7.5" fill="none" stroke="#cccccc" stroke-width="1.45"/></svg>
<span class="t" style="left:57.0px;color:#c9aa3a">resources</span>
<div class="abs" style="left:449px;top:12.5px;width:12px;height:12px;border-radius:6px;background:#7a6a3a"></div>
</div>
<div class="row" style="top:1473.70px;">
<svg class="abs" style="left:42.3px;top:9.3px" width="18" height="18" viewBox="0 0 18 18"><path d="M1.5 5.5l7.5 7.5l7.5-7.5" fill="none" stroke="#cccccc" stroke-width="1.45"/></svg>
<span class="t" style="left:70.3px;color:#c9aa3a">css</span>
<div class="abs" style="left:449px;top:12.5px;width:12px;height:12px;border-radius:6px;background:#7a6a3a"></div>
</div>
<div class="row" style="top:1510.37px;">
<span class="t" style="left:55.7px;color:#6398b7;font-weight:bold">#</span>
<span class="t" style="left:83.7px;color:#c9aa3a">app.css</span>
<span class="t" style="left:450px;color:#c9aa3a">3</span>
</div>
<div class="abs" style="left:46.7px;top:1217.0px;width:1.667px;height:73.3px;background:#585858"></div>
</div>
<div class="abs" style="left:0;top:261.7px;width:490px;height:6px;background:linear-gradient(rgba(12,12,12,0.75),rgba(12,12,12,0))"></div>
<div class="abs" style="left:0;top:225px;width:490px;height:36.667px;background:#252526">
<svg class="abs" style="left:29px;top:9.3px" width="18" height="18" viewBox="0 0 18 18"><path d="M1.5 5.5l7.5 7.5l7.5-7.5" fill="none" stroke="#cccccc" stroke-width="1.45"/></svg>
<span class="abs" style="left:57px;top:1px;line-height:36.667px;font-size:22.6px;color:#cccccc">app</span></div>
<div class="abs" style="left:0;top:1766.0px;width:490px;height:36.667px;border-top:1.667px solid #3c3c3c;background:#252526"></div>
<svg class="abs" style="left:8px;top:1776.0px" width="18" height="18" viewBox="0 0 18 18"><path d="M5.5 1.5l7.5 7.5l-7.5 7.5" fill="none" stroke="#cccccc" stroke-width="1.45"/></svg>
<div class="abs" style="left:34px;top:1766.0px;height:36.667px;line-height:36.667px;font-size:18.8px;font-weight:bold;color:#cccccc">OUTLINE</div>
<div class="abs" style="left:0;top:1802.7px;width:490px;height:36.667px;border-top:1.667px solid #3c3c3c;background:#252526"></div>
<svg class="abs" style="left:8px;top:1812.667px" width="18" height="18" viewBox="0 0 18 18"><path d="M5.5 1.5l7.5 7.5l-7.5 7.5" fill="none" stroke="#cccccc" stroke-width="1.45"/></svg>
<div class="abs" style="left:34px;top:1802.7px;height:36.667px;line-height:36.667px;font-size:18.8px;font-weight:bold;color:#cccccc">NPM SCRIPTS</div>
<div class="abs" style="left:0;top:1839.3px;width:490px;height:36.667px;border-top:1.667px solid #3c3c3c;background:#252526"></div>
<svg class="abs" style="left:8px;top:1849.334px" width="18" height="18" viewBox="0 0 18 18"><path d="M5.5 1.5l7.5 7.5l-7.5 7.5" fill="none" stroke="#cccccc" stroke-width="1.45"/></svg>
<div class="abs" style="left:34px;top:1839.3px;height:36.667px;line-height:36.667px;font-size:18.8px;font-weight:bold;color:#cccccc">TIMELINE</div>
<div class="abs" style="left:27.5px;top:1757px;width:299px;height:88px;border-radius:10px;background:#252526;border:1.667px solid #3a3a3a;box-shadow:0 4px 12px rgba(0,0,0,0.5)"></div>
<svg class="abs" style="left:41px;top:1772px" width="17" height="17" viewBox="0 0 17 17"><g fill="none" stroke="#a0a0a0" stroke-width="1.4"><rect x="1.5" y="5.5" width="13.5" height="9.5" rx="0.8"/><path d="M8.2 5.5v9.5M8.2 5.5c-0.8-3-2.2-4-3.5-4s-2 1.2-1.2 4M8.2 5.5c0.8-3 2.2-4 3.5-4s2 1.2 1.2 4"/></g></svg>
<div class="abs" style="left:68px;top:1767px;line-height:26px;font-size:17.3px;font-weight:bold;color:#8b8b8b;white-space:nowrap">New update available</div>
<svg class="abs" style="left:291px;top:1773px" width="16" height="16" viewBox="0 0 16 16"><path d="M2 2l12 12M14 2l-12 12" stroke="#bbbbbb" stroke-width="1.6"/></svg>
<div class="abs" style="left:41px;top:1804px;width:271px;height:27px;border-radius:6px;background:#2c5c8f;color:#ffffff;text-align:center;line-height:29px;font-size:18.2px;font-weight:bold">Update now</div>
<div class="abs" style="top:130px;left:490px;width:2450px;height:1746px;background:#1e1e1e"></div>
<div class="abs" style="top:130px;left:490px;width:2450px;height:58px;background:#252526"></div>
<div class="tab" style="left:490px;width:121px;background:#2d2d2d">
<span class="tt" style="right:60.0px;color:#a0a0a0">eb.php</span>
</div>
<div class="tab" style="left:611px;width:376px;background:#2d2d2d">
<svg class="ele" style="left:22.5px;top:21.5px" viewBox="0 0 21 15" width="21" height="15"><path fill="#9976bf" d="M0.3 7C0.3 2.5 3 0 6 0C8 0 9.5 0.8 10 1.2C11 1 12 1 13 1C17 1 19.5 3 20.3 6.5L21 7.4L20 7.2L19 8.2L18.8 15L15 15L14.8 11L10 11L9.8 15L6.5 15L6.3 10C5.5 9.6 5 10.2 5 11C5 12 6 13.6 4 14.2L2.4 13.6C3.8 13 3.6 12 2.8 11.5C1 10.5 0.3 9 0.3 7Z"/><path d="M10.2 1.4C10.8 3.5 10 6.6 7.2 7C6.2 7.1 5.4 6.6 5.2 6.2" fill="none" stroke="#252526" stroke-width="0.8"/><circle cx="2.6" cy="8.2" r="0.6" fill="#252526"/></svg>
<span class="tt" style="left:54.7px;color:#a0a0a0">forgot-password.blade.php</span>
</div>
<div class="tab" style="left:987px;width:464px;background:#2d2d2d">
<svg class="ele" style="left:22.5px;top:21.5px" viewBox="0 0 21 15" width="21" height="15"><path fill="#9976bf" d="M0.3 7C0.3 2.5 3 0 6 0C8 0 9.5 0.8 10 1.2C11 1 12 1 13 1C17 1 19.5 3 20.3 6.5L21 7.4L20 7.2L19 8.2L18.8 15L15 15L14.8 11L10 11L9.8 15L6.5 15L6.3 10C5.5 9.6 5 10.2 5 11C5 12 6 13.6 4 14.2L2.4 13.6C3.8 13 3.6 12 2.8 11.5C1 10.5 0.3 9 0.3 7Z"/><path d="M10.2 1.4C10.8 3.5 10 6.6 7.2 7C6.2 7.1 5.4 6.6 5.2 6.2" fill="none" stroke="#252526" stroke-width="0.8"/><circle cx="2.6" cy="8.2" r="0.6" fill="#252526"/></svg>
<span class="tt" style="left:54.8px;color:#a0a0a0">AuthenticatedSessionController.php</span>
</div>
<div class="tab" style="left:1451px;width:325px;background:#2d2d2d">
<svg class="ele" style="left:23.5px;top:21.5px" viewBox="0 0 21 15" width="21" height="15"><path fill="#9976bf" d="M0.3 7C0.3 2.5 3 0 6 0C8 0 9.5 0.8 10 1.2C11 1 12 1 13 1C17 1 19.5 3 20.3 6.5L21 7.4L20 7.2L19 8.2L18.8 15L15 15L14.8 11L10 11L9.8 15L6.5 15L6.3 10C5.5 9.6 5 10.2 5 11C5 12 6 13.6 4 14.2L2.4 13.6C3.8 13 3.6 12 2.8 11.5C1 10.5 0.3 9 0.3 7Z"/><path d="M10.2 1.4C10.8 3.5 10 6.6 7.2 7C6.2 7.1 5.4 6.6 5.2 6.2" fill="none" stroke="#252526" stroke-width="0.8"/><circle cx="2.6" cy="8.2" r="0.6" fill="#252526"/></svg>
<span class="tt" style="left:55.0px;color:#a0a0a0">ProductController.php</span>
</div>
<div class="tab" style="left:1776px;width:438px;background:#2d2d2d">
<svg class="ele" style="left:22.5px;top:21.5px" viewBox="0 0 21 15" width="21" height="15"><path fill="#9976bf" d="M0.3 7C0.3 2.5 3 0 6 0C8 0 9.5 0.8 10 1.2C11 1 12 1 13 1C17 1 19.5 3 20.3 6.5L21 7.4L20 7.2L19 8.2L18.8 15L15 15L14.8 11L10 11L9.8 15L6.5 15L6.3 10C5.5 9.6 5 10.2 5 11C5 12 6 13.6 4 14.2L2.4 13.6C3.8 13 3.6 12 2.8 11.5C1 10.5 0.3 9 0.3 7Z"/><path d="M10.2 1.4C10.8 3.5 10 6.6 7.2 7C6.2 7.1 5.4 6.6 5.2 6.2" fill="none" stroke="#252526" stroke-width="0.8"/><circle cx="2.6" cy="8.2" r="0.6" fill="#252526"/></svg>
<span class="tt" style="left:54.0px;color:#e58c77">ProductController_updated.php</span>
<span class="tt" style="left:380px;color:#e58c77">1</span>
</div>
<div class="tab" style="left:2214px;width:307.5px;background:#2d2d2d">
<svg class="ele" style="left:23.0px;top:21.5px" viewBox="0 0 21 15" width="21" height="15"><path fill="#9976bf" d="M0.3 7C0.3 2.5 3 0 6 0C8 0 9.5 0.8 10 1.2C11 1 12 1 13 1C17 1 19.5 3 20.3 6.5L21 7.4L20 7.2L19 8.2L18.8 15L15 15L14.8 11L10 11L9.8 15L6.5 15L6.3 10C5.5 9.6 5 10.2 5 11C5 12 6 13.6 4 14.2L2.4 13.6C3.8 13 3.6 12 2.8 11.5C1 10.5 0.3 9 0.3 7Z"/><path d="M10.2 1.4C10.8 3.5 10 6.6 7.2 7C6.2 7.1 5.4 6.6 5.2 6.2" fill="none" stroke="#252526" stroke-width="0.8"/><circle cx="2.6" cy="8.2" r="0.6" fill="#252526"/></svg>
<span class="tt" style="left:54.5px;color:#a0a0a0">QuestionSeeder.php</span>
</div>
<div class="tab" style="left:2521.5px;width:311.5px;background:#1e1e1e">
<svg class="ele" style="left:23.0px;top:21.5px" viewBox="0 0 21 15" width="21" height="15"><path fill="#9976bf" d="M0.3 7C0.3 2.5 3 0 6 0C8 0 9.5 0.8 10 1.2C11 1 12 1 13 1C17 1 19.5 3 20.3 6.5L21 7.4L20 7.2L19 8.2L18.8 15L15 15L14.8 11L10 11L9.8 15L6.5 15L6.3 10C5.5 9.6 5 10.2 5 11C5 12 6 13.6 4 14.2L2.4 13.6C3.8 13 3.6 12 2.8 11.5C1 10.5 0.3 9 0.3 7Z"/><path d="M10.2 1.4C10.8 3.5 10 6.6 7.2 7C6.2 7.1 5.4 6.6 5.2 6.2" fill="none" stroke="#252526" stroke-width="0.8"/><circle cx="2.6" cy="8.2" r="0.6" fill="#252526"/></svg>
<span class="tt" style="left:53.5px;color:#ffffff">DatabaseSeeder.php</span>
<svg class="abs" style="left:280.5px;top:21px" width="16" height="16" viewBox="0 0 16 16"><path d="M1 1l14 14M15 1l-14 14" stroke="#ffffff" stroke-width="1.8"/></svg>
</div>
<svg class="abs" style="left:2846px;top:146px" width="26" height="24" viewBox="0 0 26 24"><g fill="none" stroke="#cccccc" stroke-width="1.8"><rect x="2" y="1.5" width="21" height="21" rx="2"/><line x1="12.5" y1="1.5" x2="12.5" y2="22.5"/></g></svg>
<svg class="abs" style="left:2888px;top:152px" width="28" height="12" viewBox="0 0 28 12"><g fill="#cccccc"><circle cx="5" cy="6" r="2"/><circle cx="13.5" cy="6" r="2"/><circle cx="22" cy="6" r="2"/></g></svg>
<div class="abs" style="left:517px;top:188px;height:37px;line-height:37px;font-size:22.3px;color:#a9a9a9;white-space:nowrap">database</div>
<svg class="abs" style="left:618px;top:197px" width="12" height="18" viewBox="0 0 12 18"><path d="M2.5 2l7 7l-7 7" fill="none" stroke="#a9a9a9" stroke-width="1.6"/></svg>
<div class="abs" style="left:636px;top:188px;height:37px;line-height:37px;font-size:22.3px;color:#a9a9a9;white-space:nowrap">seeders</div>
<svg class="abs" style="left:725px;top:197px" width="12" height="18" viewBox="0 0 12 18"><path d="M2.5 2l7 7l-7 7" fill="none" stroke="#a9a9a9" stroke-width="1.6"/></svg>
<svg class="ele" style="left:749px;top:199px" viewBox="0 0 21 15" width="21" height="15"><path fill="#9976bf" d="M0.3 7C0.3 2.5 3 0 6 0C8 0 9.5 0.8 10 1.2C11 1 12 1 13 1C17 1 19.5 3 20.3 6.5L21 7.4L20 7.2L19 8.2L18.8 15L15 15L14.8 11L10 11L9.8 15L6.5 15L6.3 10C5.5 9.6 5 10.2 5 11C5 12 6 13.6 4 14.2L2.4 13.6C3.8 13 3.6 12 2.8 11.5C1 10.5 0.3 9 0.3 7Z"/><path d="M10.2 1.4C10.8 3.5 10 6.6 7.2 7C6.2 7.1 5.4 6.6 5.2 6.2" fill="none" stroke="#252526" stroke-width="0.8"/><circle cx="2.6" cy="8.2" r="0.6" fill="#252526"/></svg>
<div class="abs" style="left:780px;top:188px;height:37px;line-height:37px;font-size:22.3px;color:#a9a9a9;white-space:nowrap">DatabaseSeeder.php</div>
<svg class="abs" style="left:999px;top:197px" width="12" height="18" viewBox="0 0 12 18"><path d="M2.5 2l7 7l-7 7" fill="none" stroke="#a9a9a9" stroke-width="1.6"/></svg>
<div class="abs" style="left:1018px;top:188px;height:37px;line-height:37px;font-size:22.3px;color:#a9a9a9;white-space:nowrap">...</div>
<div class="abs" style="left:610.5px;top:629.5px;width:56.2px;height:35px;background:#2e2e20"></div>
<div class="abs" style="left:610.5px;top:664.5px;width:56.2px;height:35px;background:#2e2e20"></div>
<div class="abs" style="left:610.5px;top:699.5px;width:56.2px;height:35px;background:#2e2e20"></div>
<div class="abs" style="left:610.5px;top:734.5px;width:56.2px;height:35px;background:#2e2e20"></div>
<div class="abs" style="left:610.5px;top:769.5px;width:56.2px;height:35px;background:#2e2e20"></div>
<div class="abs" style="left:610.5px;top:804.5px;width:56.2px;height:35px;background:#2e2e20"></div>
<div class="abs" style="left:666.7px;top:664.5px;width:56.2px;height:35px;background:#252e25"></div>
<div class="abs" style="left:666.7px;top:699.5px;width:42.2px;height:35px;background:#252e25"></div>
<div class="abs" style="left:666.7px;top:804.5px;width:56.2px;height:35px;background:#252e25"></div>
<div class="abs" style="left:610.5px;top:874.5px;width:56.2px;height:35px;background:#2e2e20"></div>
<div class="abs" style="left:610.5px;top:909.5px;width:56.2px;height:35px;background:#2e2e20"></div>
<div class="abs" style="left:610.5px;top:944.5px;width:56.2px;height:35px;background:#2e2e20"></div>
<div class="abs" style="left:610.5px;top:979.5px;width:56.2px;height:35px;background:#2e2e20"></div>
<div class="abs" style="left:610.5px;top:1014.5px;width:56.2px;height:35px;background:#2e2e20"></div>
<div class="abs" style="left:610.5px;top:1049.5px;width:56.2px;height:35px;background:#2e2e20"></div>
<div class="abs" style="left:610.5px;top:1084.5px;width:56.2px;height:35px;background:#2e2e20"></div>
<div class="abs" style="left:610.5px;top:1119.5px;width:56.2px;height:35px;background:#2e2e20"></div>
<div class="abs" style="left:666.7px;top:874.5px;width:56.2px;height:35px;background:#252e25"></div>
<div class="abs" style="left:666.7px;top:909.5px;width:56.2px;height:35px;background:#252e25"></div>
<div class="abs" style="left:666.7px;top:944.5px;width:56.2px;height:35px;background:#252e25"></div>
<div class="abs" style="left:666.7px;top:979.5px;width:56.2px;height:35px;background:#252e25"></div>
<div class="abs" style="left:666.7px;top:1014.5px;width:56.2px;height:35px;background:#252e25"></div>
<div class="abs" style="left:666.7px;top:1049.5px;width:56.2px;height:35px;background:#252e25"></div>
<div class="abs" style="left:666.7px;top:1084.5px;width:56.2px;height:35px;background:#252e25"></div>
<div class="abs" style="left:722.9px;top:909.5px;width:56.2px;height:35px;background:#2b262f"></div>
<div class="abs" style="left:722.9px;top:944.5px;width:56.2px;height:35px;background:#2b262f"></div>
<div class="abs" style="left:722.9px;top:1049.5px;width:56.2px;height:35px;background:#2b262f"></div>
<div class="abs" style="left:610.5px;top:629.5px;width:1.667px;height:525px;background:#404040"></div>
<div class="abs" style="left:666.7px;top:804.5px;width:1.667px;height:315px;background:#404040"></div>
<div class="abs" style="left:610px;top:524.5px;width:2330px;height:35px;border:1.667px solid #282828"></div>
<div class="ln" style="top:279.5px;color:#858585">1</div>
<div class="code" style="top:279.5px"><span class="kw">&lt;?php</span></div>
<div class="ln" style="top:314.5px;color:#858585">2</div>
<div class="ln" style="top:349.5px;color:#858585">3</div>
<div class="code" style="top:349.5px"><span class="kw">namespace</span> <span class="cl">Database\Seeders</span>;</div>
<div class="ln" style="top:384.5px;color:#858585">4</div>
<div class="ln" style="top:419.5px;color:#858585">5</div>
<div class="code" style="top:419.5px"><span class="kw">use</span> App\Models\<span class="cl">User</span>;</div>
<div class="ln" style="top:454.5px;color:#858585">6</div>
<div class="code" style="top:454.5px"><span class="cm">// use Illuminate\Database\Console\Seeds\WithoutModelEvents;</span></div>
<div class="ln" style="top:489.5px;color:#858585">7</div>
<div class="code" style="top:489.5px"><span class="kw">use</span> Illuminate\Database\<span class="cl">Seeder</span>;</div>
<div class="ln" style="top:524.5px;color:#cccccc">8</div>
<div class="ln" style="top:559.5px;color:#858585">9</div>
<div class="code" style="top:559.5px"><span class="kw">class</span> <span class="cl">DatabaseSeeder</span> <span class="kw">extends</span> <span class="cl">Seeder</span></div>
<div class="ln" style="top:594.5px;color:#858585">10</div>
<div class="code" style="top:594.5px"><span class="b1">{</span></div>
<div class="ln" style="top:629.5px;color:#858585">11</div>
<div class="code" style="top:629.5px">    <span class="cm">/**</span></div>
<div class="ln" style="top:664.5px;color:#858585">12</div>
<div class="code" style="top:664.5px"><span class="cm">     * Seed the application's database.</span></div>
<div class="ln" style="top:699.5px;color:#858585">13</div>
<div class="code" style="top:699.5px"><span class="cm">     */</span></div>
<div class="ln" style="top:734.5px;color:#858585">14</div>
<div class="code" style="top:734.5px">    <span class="kw">public</span> <span class="kw">function</span> <span class="fn">run</span><span class="b2">()</span>: <span class="kw">void</span></div>
<div class="ln" style="top:769.5px;color:#858585">15</div>
<div class="code" style="top:769.5px">    <span class="b2">{</span></div>
<div class="ln" style="top:804.5px;color:#858585">16</div>
<div class="code" style="top:804.5px">        <span class="cm">// User::factory(10)-&gt;create();</span></div>
<div class="ln" style="top:839.5px;color:#858585">17</div>
<div class="ln" style="top:874.5px;color:#858585">18</div>
<div class="code" style="top:874.5px">        <span class="cl">User</span>::<span class="fn">factory</span><span class="b3">()</span>-&gt;<span class="fn">create</span><span class="b3">(</span><span class="b1">[</span></div>
<div class="ln" style="top:909.5px;color:#858585">19</div>
<div class="code" style="top:909.5px">            <span class="st">'name'</span> =&gt; <span class="st">'Test User'</span>,</div>
<div class="ln" style="top:944.5px;color:#858585">20</div>
<div class="code" style="top:944.5px">            <span class="st">'email'</span> =&gt; <span class="st">'test@example.com'</span>,</div>
<div class="ln" style="top:979.5px;color:#858585">21</div>
<div class="code" style="top:979.5px">        <span class="b1">]</span><span class="b3">)</span>;</div>
<div class="ln" style="top:1014.5px;color:#858585">22</div>
<div class="code" style="top:1014.5px">        <span class="kw">$this</span>-&gt;<span class="fn">call</span><span class="b3">(</span><span class="b1">[</span></div>
<div class="ln" style="top:1049.5px;color:#858585">23</div>
<div class="code" style="top:1049.5px">            <span class="cl">QuestionSeeder</span>::<span class="kw">class</span>,</div>
<div class="ln" style="top:1084.5px;color:#858585">24</div>
<div class="code" style="top:1084.5px">        <span class="b1">]</span><span class="b3">)</span>;</div>
<div class="ln" style="top:1119.5px;color:#858585">25</div>
<div class="code" style="top:1119.5px">    <span class="b2">}</span></div>
<div class="ln" style="top:1154.5px;color:#858585">26</div>
<div class="code" style="top:1154.5px"><span class="b1">}</span></div>
<div class="ln" style="top:1189.5px;color:#858585">27</div>
<div class="abs" style="left:2917px;top:225px;width:23px;height:650px;background:#424242"></div>
<div class="abs" style="left:2917px;top:389px;width:23px;height:3px;background:#a0a0a0"></div>
<div class="abs" style="left:2195px;top:225px;width:698px;height:55px;background:#252526;border-left:3px solid #454545;border-radius:0 0 6px 6px;box-shadow:0 2px 8px rgba(0,0,0,0.55)"></div>
<svg class="abs" style="left:2209px;top:242px" width="14" height="20" viewBox="0 0 14 20"><path d="M3 2l8 8l-8 8" fill="none" stroke="#cccccc" stroke-width="1.7"/></svg>
<div class="abs" style="left:2231px;top:230px;width:358px;height:42px;background:#3c3c3c;border-radius:4px"></div>
<div class="abs" style="left:2242px;top:230px;height:42px;line-height:42px;font-size:23.3px;color:#cccccc;white-space:nowrap">product_id" v</div>
<div class="abs" style="left:2485px;top:230px;height:42px;line-height:42px;font-size:18px;color:#c0c0c0;white-space:nowrap">Aa</div>
<div class="abs" style="left:2520px;top:230px;height:42px;line-height:40px;font-size:18px;color:#c0c0c0;white-space:nowrap">ab</div>
<svg class="abs" style="left:2517px;top:255px" width="30" height="10" viewBox="0 0 30 10"><path d="M1.5 1v6h27v-6" fill="none" stroke="#c0c0c0" stroke-width="1.6"/></svg>
<div class="abs" style="left:2558.5px;top:254px;width:7px;height:7px;background:#c0c0c0"></div>
<svg class="abs" style="left:2566px;top:240px" width="16" height="16" viewBox="0 0 16 16"><g stroke="#c0c0c0" stroke-width="1.7"><path d="M7.5 1.5v13M1.9 4.75l11.2 6.5M13.1 4.75l-11.2 6.5"/></g></svg>
<div class="abs" style="left:2597px;top:230px;height:44px;line-height:44px;font-size:21.1px;color:#e58c77;white-space:nowrap">No results</div>
<svg class="abs" style="left:2730px;top:238px" width="150" height="28" viewBox="0 0 150 28">
<g fill="none" stroke="#8a8a8a" stroke-width="1.7">
<path d="M15 3v20M6 12l9-9l9 9"/><path d="M56 3v20M47 14l9 9l9-9"/></g>
<g fill="none" stroke="#c8c8c8" stroke-width="1.7"><path d="M86 6h23M86 13h23M86 20h14"/><path d="M130 6l14 14M144 6l-14 14"/></g></svg>
<div class="abs" style="left:490px;top:1406.5px;width:2450px;height:1.667px;background:#414141"></div>
<div class="abs" style="left:958px;top:1419px;width:108.5px;height:35px;border-radius:6px;background:#2f2f33"></div>
<div class="abs" style="left:523.2px;top:1420px;height:35px;line-height:35px;font-size:19.5px;font-weight:bold;color:#a0a0a0;white-space:nowrap">Problems</div>
<div class="abs" style="left:691px;top:1420px;height:35px;line-height:35px;font-size:19.5px;font-weight:bold;color:#a0a0a0;white-space:nowrap">Output</div>
<div class="abs" style="left:791.5px;top:1420px;height:35px;line-height:35px;font-size:19.5px;font-weight:bold;color:#a0a0a0;white-space:nowrap">Debug Console</div>
<div class="abs" style="left:972.4px;top:1420px;height:35px;line-height:35px;font-size:19.5px;font-weight:bold;color:#ffffff;white-space:nowrap">Terminal</div>
<div class="abs" style="left:1087.5px;top:1420px;height:35px;line-height:35px;font-size:19.5px;font-weight:bold;color:#a0a0a0;white-space:nowrap">Ports</div>
<div class="abs" style="left:631px;top:1422px;width:30px;height:30px;border-radius:15px;background:#454545;color:#e0e0e0;text-align:center;line-height:31px;font-size:18.5px">8</div>
<svg class="abs" style="left:2730px;top:1420px" width="190" height="34" viewBox="0 0 190 34">
<g fill="none" stroke="#cccccc" stroke-width="1.8">
<path d="M19 5v24M7 17h24"/><path d="M41 15.5l6 6l6-6"/>
<path d="M120 20.5l8.25-8.5l8.25 8.5"/><path d="M165 10l14 14M179 10l-14 14"/></g>
<g fill="#cccccc"><circle cx="77" cy="17" r="1.9"/><circle cx="85" cy="17" r="1.9"/><circle cx="93" cy="17" r="1.9"/></g></svg>
<div class="term" style="top:1466.0px">  2025_06_17_125410_create_products_table <span class="dim">............................................................................................. 15.45ms</span> <span class="gr">DONE</span></div>
<div class="term" style="top:1490.1px">  2025_06_17_132057_create_assessments_table <span class="dim">.......................................................................................... 38.32ms</span> <span class="gr">DONE</span></div>
<div class="term" style="top:1514.1px">  2025_06_17_133003_create_answers_table <span class="dim">.............................................................................................. 25.99ms</span> <span class="gr">DONE</span></div>
<div class="term" style="top:1538.2px">  2025_06_18_070343_add_image_to_products_table <span class="dim">........................................................................................ 4.90ms</span> <span class="gr">DONE</span></div>
<div class="term" style="top:1562.3px">  2025_06_24_025723_create_companies_table <span class="dim">............................................................................................. 9.26ms</span> <span class="gr">DONE</span></div>
<div class="term" style="top:1586.3px">  2025_06_24_030048_add_company_id_to_users_table <span class="dim">..................................................................................... 17.50ms</span> <span class="gr">DONE</span></div>
<div class="term" style="top:1610.4px">  2025_06_25_014657_add_address_to_companies_table <span class="dim">..................................................................................... 5.13ms</span> <span class="gr">DONE</span></div>
<div class="term" style="top:1682.6px">  <span style="background:#3b70c2;color:#ffffff"> INFO </span> Seeding database.</div>
<div class="term" style="top:1730.8px">  Database\Seeders\QuestionSeeder <span class="dim">..........................................................................................................</span> <span class="yl">RUNNING</span></div>
<div class="term" style="top:1754.8px">  Database\Seeders\QuestionSeeder <span class="dim">...................................................................................................... 219 ms</span> <span class="gr">DONE</span></div>
<div class="term" style="top:1803.0px">aritach@MacBook-Air sas-log % </div>
<div class="abs" style="left:884px;top:1803.5px;width:12px;height:23px;border:1.667px solid #cccccc"></div>
<div class="abs" style="left:502px;top:1809.0px;width:12px;height:12px;border-radius:6px;border:1.8px solid #6a6a6a"></div>
<svg class="abs" style="left:1436.5px;top:1850.5px" width="14" height="13" viewBox="0 0 14 13"><g fill="none" stroke="#9a9a9a" stroke-width="1.4"><circle cx="2.6" cy="2.6" r="1.9"/><circle cx="10.9" cy="2.6" r="1.9"/><circle cx="2.6" cy="10" r="1.9"/><circle cx="10.9" cy="10" r="1.9"/><path d="M4.5 2.6v7.4M9 2.6v7.4M2.6 4.5h8.3M2.6 8.1h8.3"/></g></svg>
<div class="abs" style="left:1452px;top:1846px;line-height:25px;font-size:17.9px;color:#9a9a9a;white-space:nowrap">K to generate a command</div>
<div class="abs" style="left:2579.5px;top:1465.5px;width:1.667px;height:361px;background:#3a3a3a"></div>
<div class="abs" style="left:2602.5px;top:1465.5px;width:1.667px;height:410.5px;background:#3a3a3a"></div>
<div class="abs" style="left:2581px;top:1466px;width:7.5px;height:60px;background:#3f80ad"></div>
<div class="abs" style="left:2581px;top:1528px;width:7.5px;height:17px;background:#3f80ad"></div>
<div class="abs" style="left:2596px;top:1540px;width:7px;height:10px;background:#df5953"></div>
<div class="abs" style="left:2596px;top:1568.5px;width:7px;height:10px;background:#df5953"></div>
<div class="abs" style="left:2596px;top:1596.5px;width:7px;height:10px;background:#df5953"></div>
<div class="abs" style="left:2596px;top:1644.5px;width:7px;height:10px;background:#df5953"></div>
<div class="abs" style="left:2596px;top:1693.5px;width:7px;height:10px;background:#df5953"></div>
<div class="abs" style="left:2596px;top:1743px;width:7px;height:10px;background:#df5953"></div>
<div class="abs" style="left:2581px;top:1792px;width:7px;height:10px;background:#3f80ad"></div>
<div class="abs" style="left:2581px;top:1819px;width:7px;height:7px;background:#6a6a6a"></div>
<div class="abs" style="left:2604px;top:1502.7px;width:336px;height:36px;background:#37373d"></div>
<svg class="abs" style="left:2621px;top:1473.6px" width="24" height="22" viewBox="0 0 24 22"><g fill="none" stroke="#cccccc" stroke-width="1.6"><rect x="1.5" y="1" width="21" height="20" rx="1.5"/><path d="M6 6l4.5 4.5l-4.5 4.5M11.5 16h6"/></g></svg>
<div class="abs" style="left:2653px;top:1465.6px;height:36.67px;line-height:36.67px;font-size:22.3px;color:#cccccc">php</div>
<svg class="abs" style="left:2621px;top:1510.3px" width="24" height="22" viewBox="0 0 24 22"><g fill="none" stroke="#cccccc" stroke-width="1.6"><rect x="1.5" y="1" width="21" height="20" rx="1.5"/><path d="M6 6l4.5 4.5l-4.5 4.5M11.5 16h6"/></g></svg>
<div class="abs" style="left:2653px;top:1502.3px;height:36.67px;line-height:36.67px;font-size:22.3px;color:#cccccc">zsh</div>
<div class="abs" style="left:0;top:1876px;width:2940px;height:36px;background:#3478c6"></div>
<div class="abs" style="left:0;top:1876px;width:57px;height:36px;background:#3d8060"></div>
<svg class="abs" style="left:18px;top:1880px" width="22" height="26" viewBox="0 0 22 26"><path d="M3.2 9l7 6.7l-7 6M17.3 3.6l-6 6l6 6.4" fill="none" stroke="#ffffff" stroke-width="1.6"/></svg>
<svg class="abs" style="left:68px;top:1880px" width="170" height="28" viewBox="0 0 170 28">
<g fill="none" stroke="#ffffff" stroke-width="1.6">
<circle cx="13" cy="14" r="9.5"/><path d="M9 10l8 8M17 10l-8 8"/>
<path d="M60 4.5l10 18h-20z"/><path d="M60 10v6.5"/><circle cx="60" cy="19.3" r="0.5"/>
<path d="M129.5 14v1l-5 10M129.5 15l5 10M126 22h7"/><circle cx="129.5" cy="12" r="2"/>
<path d="M125.5 8a6.5 6.5 0 0 0 0 8.5M133.5 8a6.5 6.5 0 0 1 0 8.5M122.5 4.5a11 11 0 0 0 0 15M136.5 4.5a11 11 0 0 1 0 15"/>
</g></svg>
<div class="sb" style="left:100.5px">1</div><div class="sb" style="left:146px">7</div><div class="sb" style="left:215.5px">0</div>
<div class="abs" style="left:2113px;top:1876px;width:57px;height:36px;background:#1f3e66"></div>
<svg class="abs" style="left:2128px;top:1883px" width="26" height="24" viewBox="0 0 26 24"><g fill="none" stroke="#ffffff" stroke-width="1.7"><circle cx="10" cy="10" r="7.5"/><path d="M6 10h8M15.5 15.5l6 6"/></g></svg>
<div class="sb" style="left:2183.7px">Ln 8, Col 1</div>
<div class="sb" style="left:2311.8px">Spaces: 4</div>
<div class="sb" style="left:2431.8px">UTF-8</div>
<div class="sb" style="left:2520px">LF</div>
<div class="sb" style="left:2569.5px">PHP</div>
<div class="sb" style="left:2665.5px">Go Live</div>
<div class="sb" style="left:2762.5px">Cursor Tab</div>
<svg class="abs" style="left:2636px;top:1881px" width="24" height="28" viewBox="0 0 24 28"><g fill="none" stroke="#ffffff" stroke-width="1.7"><path d="M5.5 16.5a8 8 0 1 1 13 0"/><path d="M8.5 13.5a4 4 0 1 1 7 0"/></g><path d="M10.5 13h3v13h-3z" fill="#ffffff"/></svg>
<svg class="abs" style="left:2892px;top:1879px" width="26" height="30" viewBox="0 0 26 30"><g fill="none" stroke="#ffffff" stroke-width="1.7"><path d="M4 21h16M6 21v-8a6 6 0 0 1 12 0v8M10 24a2 2 0 0 0 4 0"/></g><circle cx="19" cy="6" r="4.5" fill="#ffffff" stroke="#3478c6" stroke-width="1.5"/></svg>
</body></html>
